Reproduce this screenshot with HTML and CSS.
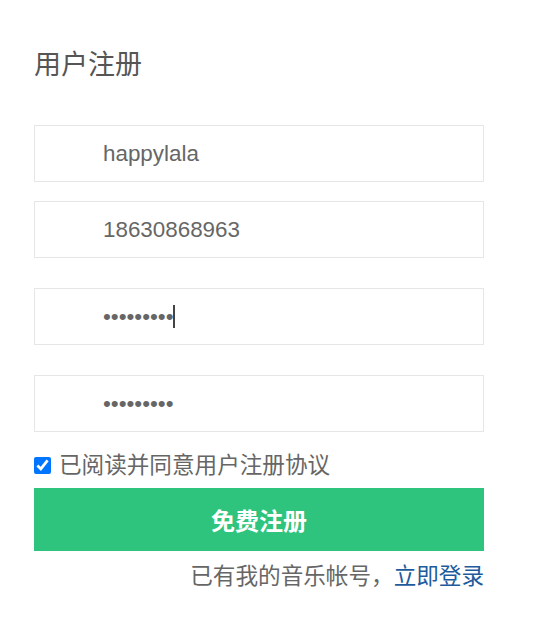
FILE: index.html
```html
<!DOCTYPE html>
<html lang="zh-CN">
<head>
<meta charset="utf-8">
<title>用户注册</title>
<link rel="stylesheet" href="styles.css">
</head>
<body>
<div class="register">
  <h2 class="title">用户注册</h2>
  <form class="form">
    <div class="field field-user">
      <input class="input" type="text" value="happylala">
    </div>
    <div class="field field-phone">
      <input class="input" type="text" value="18630868963">
    </div>
    <div class="field field-pwd">
      <input class="input" type="password" value="123456789">
      <span class="caret"></span>
    </div>
    <div class="field field-pwd2">
      <input class="input" type="password" value="123456789">
    </div>
    <label class="agree">
      <input class="check" type="checkbox" checked>
      <span class="agree-text">已阅读并同意用户注册协议</span>
    </label>
    <button class="submit" type="button">免费注册</button>
    <p class="login">已有我的音乐帐号，<a class="login-link" href="#">立即登录</a></p>
  </form>
</div>
</body>
</html>
```
FILE: styles.css
```css
html, body {
  margin: 0;
  padding: 0;
  background: #fff;
}
body {
  font-family: "Liberation Sans", "Noto Sans CJK SC", sans-serif;
  color: #666;
}
.register {
  width: 450px;
  padding: 47px 0 0 34px;
}
.title {
  margin: 0;
  font-size: 27px;
  line-height: 36px;
  font-weight: normal;
  color: #555;
}
.form {
  display: flex;
  flex-direction: column;
  margin-top: 42px;
}
.field {
  position: relative;
  height: 57px;
}
.field-phone { margin-top: 19px; }
.field-pwd { margin-top: 30px; }
.field-pwd2 { margin-top: 30px; }
.input {
  box-sizing: border-box;
  width: 450px;
  height: 57px;
  margin: 0;
  padding: 0 10px 0 68px;
  border: 1px solid #e6e6e6;
  border-radius: 0;
  outline: none;
  font-family: "Liberation Sans", "Noto Sans CJK SC", sans-serif;
  font-size: 22.4px;
  color: #666;
  background: #fff;
}
.caret {
  position: absolute;
  left: 139px;
  top: 17px;
  width: 2px;
  height: 23px;
  background: #444;
}
.agree {
  display: flex;
  align-items: center;
  gap: 8px;
  margin-top: 24px;
  height: 18px;
  font-size: 22.6px;
  color: #666;
}
.agree-text {
  position: relative;
  top: -2px;
}
.check {
  width: 17px;
  height: 17px;
  margin: 0;
}
.submit {
  margin-top: 14px;
  width: 450px;
  height: 63px;
  border: none;
  background: #2fc47e;
  color: #fff;
  font-family: "Liberation Sans", "Noto Sans CJK SC", sans-serif;
  font-weight: bold;
  font-size: 24px;
  padding: 0;
}
.login {
  margin: 11px 0 0;
  text-align: right;
  font-size: 22.6px;
  line-height: 30px;
  color: #666;
}
.login-link {
  color: #1e5b9c;
  text-decoration: none;
}
```
